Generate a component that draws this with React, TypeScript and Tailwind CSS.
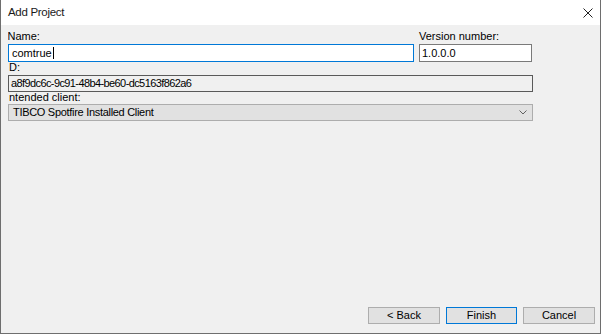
export default function App() {
  return (
    <div
      className="w-[601px] h-[334px] flex flex-col border border-[#6e6e6e] border-t-0 bg-[#f0f0f0] text-[11px] text-black leading-none overflow-hidden"
      style={{ fontFamily: '"Liberation Sans", Arial, sans-serif' }}
    >
      <div className="h-[25px] bg-white flex items-center justify-between pl-[7px] pr-[7px] shrink-0">
        <span className="text-[11.5px] tracking-[-0.3px] text-[#1a1a1a]">Add Project</span>
        <svg width="10" height="10" viewBox="0 0 10 10">
          <path d="M0.5 0.5 L9.5 9.5 M9.5 0.5 L0.5 9.5" stroke="#222" strokeWidth="1" />
        </svg>
      </div>

      <div className="flex-1 flex flex-col px-[7px] pt-[6px] pb-[9px]">
        <div className="flex gap-[5px]">
          <div className="w-[406px] flex flex-col">
            <div className="h-[13px] flex items-end pb-[2px] pl-[1px] overflow-hidden">
              <span className="-ml-[1.5px]">Name:</span>
            </div>
            <div className="h-[18px] bg-white border border-[#0078d7] flex items-center pl-[3px]">
              comtrue<span className="inline-block w-[1px] h-[12px] bg-black ml-[1px]" />
            </div>
          </div>
          <div className="w-[113px] flex flex-col">
            <div className="h-[13px] flex items-end pb-[2px]">
              <span>Version number:</span>
            </div>
            <div className="h-[18px] bg-white border border-[#7a7a7a] flex items-center pl-[2px]">1.0.0.0</div>
          </div>
        </div>

        <div className="h-[13px] flex items-end pb-[2px] pl-[1px]">
          <span>D:</span>
        </div>
        <div className="w-[525px] h-[17px] border border-[#5a5a5a] bg-[#f0f0f0] flex items-center pl-[2px]">
          <span className="tracking-[-0.6px]">a8f9dc6c-9c91-48b4-be60-dc5163f862a6</span>
        </div>

        <div className="h-[12px] flex items-end pb-[1px] pl-[1px]">
          <span>ntended client:</span>
        </div>
        <div className="w-[525px] h-[17px] border border-[#adadad] bg-[#e1e1e1] flex items-center justify-between pl-[4px] pr-[5px]">
          <span className="tracking-[-0.3px]">TIBCO Spotfire Installed Client</span>
          <svg width="8" height="5" viewBox="0 0 8 5">
            <path d="M0.5 0.5 L4 4 L7.5 0.5" fill="none" stroke="#606060" strokeWidth="1" />
          </svg>
        </div>

        <div className="flex-1" />

        <div className="flex justify-end gap-[6px] -mr-[2px]">
          <button className="w-[72px] h-[17px] border border-[#adadad] bg-[#e1e1e1] flex items-center justify-center">
            &lt; Back
          </button>
          <button className="w-[71px] h-[17px] border border-[#0078d7] bg-[#e1e1e1] flex items-center justify-center">
            Finish
          </button>
          <button className="w-[72px] h-[17px] border border-[#adadad] bg-[#e1e1e1] flex items-center justify-center">
            Cancel
          </button>
        </div>
      </div>
    </div>
  );
}
